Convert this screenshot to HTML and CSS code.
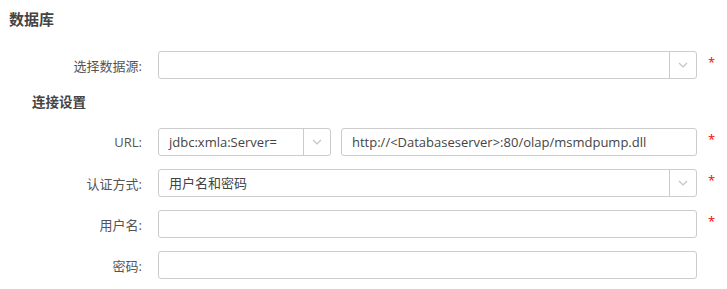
FILE: index.html
```html
<!DOCTYPE html>
<html lang="zh-CN">
<head>
  <meta charset="UTF-8">
  <title>数据库</title>
  <link rel="stylesheet" href="styles.css">
</head>
<body>
  <div class="panel">
    <h2 class="panel-title">数据库</h2>

    <div class="form-row first">
      <label class="row-label">选择数据源:</label>
      <div class="select">
        <span class="select-value"></span>
        <span class="select-arrow"><svg width="10" height="6" viewBox="0 0 10 6"><path d="M1 1l4 4 4-4" fill="none" stroke="#c4c4c4" stroke-width="1.2"/></svg></span>
      </div>
      <span class="required">*</span>
    </div>

    <h3 class="section-title">连接设置</h3>

    <div class="form-row">
      <label class="row-label">URL:</label>
      <div class="url-group">
        <div class="select prefix">
          <span class="select-value">jdbc:xmla:Server=</span>
          <span class="select-arrow"><svg width="10" height="6" viewBox="0 0 10 6"><path d="M1 1l4 4 4-4" fill="none" stroke="#c4c4c4" stroke-width="1.2"/></svg></span>
        </div>
        <div class="input">http://&lt;Databaseserver&gt;:80/olap/msmdpump.dll</div>
      </div>
      <span class="required">*</span>
    </div>

    <div class="form-row">
      <label class="row-label">认证方式:</label>
      <div class="select">
        <span class="select-value">用户名和密码</span>
        <span class="select-arrow"><svg width="10" height="6" viewBox="0 0 10 6"><path d="M1 1l4 4 4-4" fill="none" stroke="#c4c4c4" stroke-width="1.2"/></svg></span>
      </div>
      <span class="required">*</span>
    </div>

    <div class="form-row">
      <label class="row-label">用户名:</label>
      <div class="input"></div>
      <span class="required">*</span>
    </div>

    <div class="form-row">
      <label class="row-label">密码:</label>
      <div class="input"></div>
      <span class="required"></span>
    </div>
  </div>
</body>
</html>
```

FILE: styles.css
```css
body {
  margin: 0;
  background: #fff;
  font-family: "Open Sans", "Noto Sans CJK SC", sans-serif;
  font-size: 13px;
  color: #333;
}

.panel {
  padding: 9px 0 0 9px;
}

.panel-title {
  margin: 0 0 22px 0;
  font-size: 15px;
  line-height: 20px;
  font-weight: bold;
  color: #444;
}

.section-title {
  margin: 12px 0 16px 23px;
  font-size: 13.5px;
  line-height: 20px;
  font-weight: bold;
  color: #444;
}

.form-row {
  display: grid;
  grid-template-columns: 133px 539px 30px;
  column-gap: 16px;
  align-items: center;
  margin-bottom: 13px;
}

.row-label {
  text-align: right;
  color: #555;
}

.select,
.input {
  box-sizing: border-box;
  height: 28px;
  border: 1px solid #ccc;
  border-radius: 3px;
  background: #fff;
}

.select {
  display: flex;
}

.select-value {
  flex: 1;
  padding: 0 10px;
  line-height: 26px;
  color: #444;
  white-space: nowrap;
  overflow: hidden;
}

.select-arrow {
  width: 26px;
  border-left: 1px solid #ccc;
  display: flex;
  align-items: center;
  justify-content: center;
}

.input {
  padding: 0 10px;
  line-height: 26px;
  color: #444;
  white-space: nowrap;
}

.url-group {
  display: flex;
  gap: 10px;
}

.url-group .prefix {
  flex: 0 0 173px;
}

.url-group .input {
  flex: 1;
}

.required {
  color: #f00;
  font-size: 13px;
  margin-left: -5px;
  margin-top: -6px;
}
```
